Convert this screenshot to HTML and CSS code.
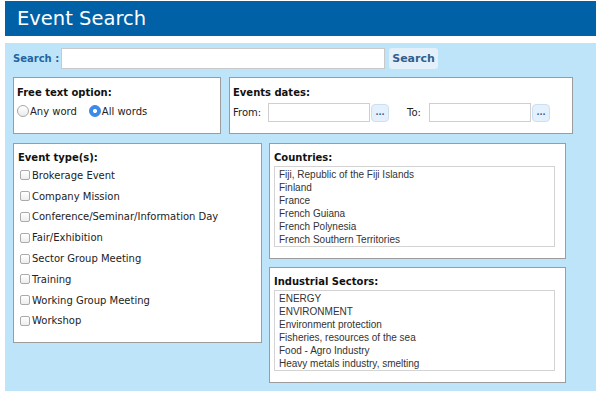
FILE: index.html
```html
<!DOCTYPE html>
<html>
<head>
<meta charset="utf-8">
<link rel="stylesheet" href="styles.css">
</head>
<body>
<div class="header">Event Search</div>
<div class="panel">
  <div class="search-row">
    <span class="search-label">Search :</span>
    <input class="search-input" type="text">
    <button class="search-btn">Search</button>
  </div>
  <div class="row2">
    <div class="box freetext">
      <div class="box-title">Free text option:</div>
      <div class="radios">
        <label class="opt"><input type="radio" name="fto" class="rd">Any word</label>
        <label class="opt"><input type="radio" name="fto" class="rd" checked>All words</label>
      </div>
    </div>
    <div class="box dates">
      <div class="box-title">Events dates:</div>
      <div class="date-row">
        <span class="date-label">From:</span>
        <input class="date-input" type="text">
        <button class="dots">...</button>
        <span class="date-label to">To:</span>
        <input class="date-input" type="text">
        <button class="dots">...</button>
      </div>
    </div>
  </div>
  <div class="row3">
    <div class="box types">
      <div class="box-title">Event type(s):</div>
      <label class="cbrow"><input type="checkbox" class="cb">Brokerage Event</label>
      <label class="cbrow"><input type="checkbox" class="cb">Company Mission</label>
      <label class="cbrow"><input type="checkbox" class="cb">Conference/Seminar/Information Day</label>
      <label class="cbrow"><input type="checkbox" class="cb">Fair/Exhibition</label>
      <label class="cbrow"><input type="checkbox" class="cb">Sector Group Meeting</label>
      <label class="cbrow"><input type="checkbox" class="cb">Training</label>
      <label class="cbrow"><input type="checkbox" class="cb">Working Group Meeting</label>
      <label class="cbrow"><input type="checkbox" class="cb">Workshop</label>
    </div>
    <div class="rightcol">
      <div class="box lbox">
        <div class="box-title">Countries:</div>
        <div class="listbox">
          <div>Fiji, Republic of the Fiji Islands</div>
          <div>Finland</div>
          <div>France</div>
          <div>French Guiana</div>
          <div>French Polynesia</div>
          <div>French Southern Territories</div>
        </div>
      </div>
      <div class="box lbox">
        <div class="box-title">Industrial Sectors:</div>
        <div class="listbox">
          <div>ENERGY</div>
          <div>ENVIRONMENT</div>
          <div>Environment protection</div>
          <div>Fisheries, resources of the sea</div>
          <div>Food - Agro Industry</div>
          <div>Heavy metals industry, smelting</div>
        </div>
      </div>
    </div>
  </div>
</div>
</body>
</html>
```
FILE: styles.css
```css
* { box-sizing: border-box; }
body {
  margin: 0;
  background: #fff;
  font-family: "DejaVu Sans", Verdana, sans-serif;
  color: #111;
}
.header {
  margin: 1px 4px 0 5px;
  height: 35px;
  background: #0061a7;
  color: #fff;
  font-size: 19.5px;
  line-height: 35px;
  padding-left: 12px;
}
.panel {
  margin: 7px 4px 0 5px;
  height: 348px;
  background: #bee4f9;
  padding: 5px 8px 0 8px;
}
.search-row {
  display: flex;
  align-items: center;
  height: 21px;
}
.search-label {
  font-size: 10px;
  font-weight: bold;
  color: #2464a0;
  width: 48px;
  flex-shrink: 0;
  white-space: nowrap;
}
.search-input {
  width: 324px;
  height: 21px;
  border: 1px solid #c9c9c9;
  background: #fff;
  margin: 0;
}
.search-btn {
  margin-left: 4px;
  width: 49px;
  height: 21px;
  border: none;
  border-radius: 3px;
  background: #e3eff9;
  color: #2f5f8e;
  font-family: "DejaVu Sans", Verdana, sans-serif;
  font-weight: bold;
  font-size: 11px;
  padding: 0;
}
.box {
  background: #fff;
  border: 1px solid #9c9c9c;
}
.box-title {
  font-size: 10px;
  font-weight: bold;
  color: #111;
}
.row2 {
  display: flex;
  gap: 8px;
  margin-top: 8px;
  height: 57px;
}
.freetext {
  width: 208px;
  padding: 9px 0 0 3px;
}
.dates {
  width: 344px;
  padding: 9px 0 0 3px;
}
.radios {
  display: flex;
  gap: 12px;
  margin-top: 7px;
}
.opt {
  display: flex;
  align-items: center;
  font-size: 10px;
  color: #222;
}
.rd {
  appearance: none;
  -webkit-appearance: none;
  width: 12px;
  height: 12px;
  margin: 0 1px 0 0;
  border-radius: 50%;
  border: 1px solid #a8a8a8;
  background: linear-gradient(#fff, #ececec);
}
.rd:checked {
  border-color: #3b86e0;
  background: radial-gradient(circle, #fff 0 1.8px, #3b8bea 2.3px);
}
.date-row {
  display: flex;
  align-items: center;
  margin-top: 5px;
  font-size: 10px;
  color: #222;
}
.date-label {
  width: 35px;
}
.date-label.to {
  width: 22px;
  margin-left: 18px;
}
.date-input {
  width: 102px;
  height: 19px;
  border: 1px solid #cfcfcf;
  margin: 0;
  background: #fff;
}
.dots {
  width: 18px;
  height: 18px;
  margin-left: 1px;
  border: 1px solid #cde0f2;
  border-radius: 4px;
  background: #e4f0fb;
  color: #2e5c93;
  font-size: 8px;
  font-weight: bold;
  line-height: 10px;
  padding: 0;
  font-family: "DejaVu Sans", sans-serif;
}
.row3 {
  display: flex;
  gap: 7px;
  margin-top: 9px;
  align-items: flex-start;
}
.types {
  width: 249px;
  height: 200px;
  padding: 8px 0 0 4px;
}
.types .box-title {
  margin-bottom: 2px;
}
.cbrow {
  display: flex;
  align-items: center;
  font-size: 10px;
  color: #222;
  height: 20.8px;
}
.cb {
  appearance: none;
  -webkit-appearance: none;
  width: 10px;
  height: 10px;
  margin: 0 2px 0 2px;
  border: 1px solid #ababab;
  border-radius: 2px;
  background: linear-gradient(#fff, #eee);
}
.rightcol {
  display: flex;
  flex-direction: column;
  gap: 8px;
}
.lbox {
  width: 297px;
  height: 116px;
  padding: 8px 0 0 4px;
}
.lbox .box-title {
  margin-bottom: 3px;
}
.listbox {
  width: 281px;
  height: 81px;
  border: 1px solid #d3d3d3;
  padding: 1px 0 0 4px;
  font-family: "Liberation Sans", Arial, sans-serif;
  font-size: 10px;
  line-height: 13px;
  color: #333;
}
```
